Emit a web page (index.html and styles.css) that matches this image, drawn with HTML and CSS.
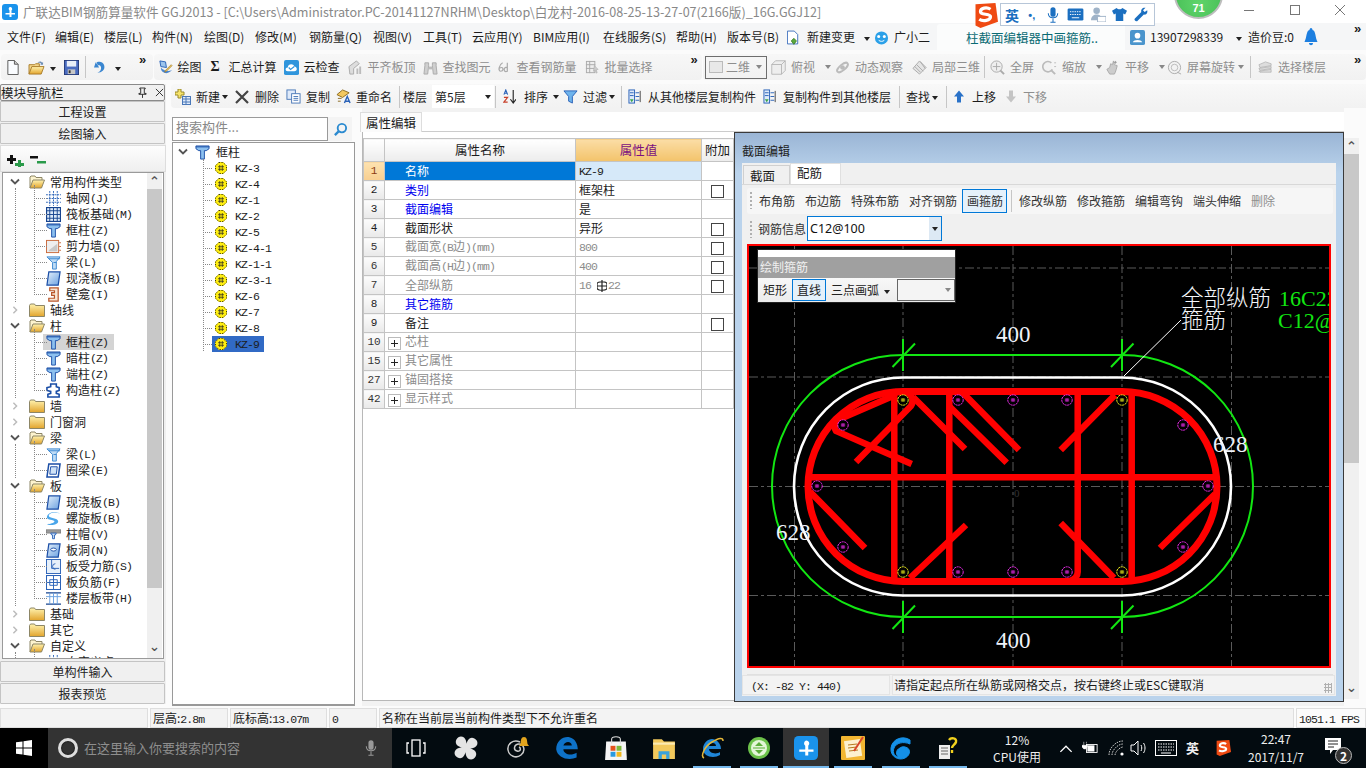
FILE: index.html
```html
<!DOCTYPE html>
<html lang="zh">
<head>
<meta charset="utf-8">
<title>GGJ2013</title>
<link rel="stylesheet" href="styles.css">
</head>
<body>
<svg class="defs" xmlns="http://www.w3.org/2000/svg">
<defs>
<linearGradient id="fy" x1="0" y1="0" x2="0" y2="1"><stop offset="0" stop-color="#fff3b0"/><stop offset="1" stop-color="#e2a42c"/></linearGradient>
<linearGradient id="fb" x1="0" y1="0" x2="1" y2="1"><stop offset="0" stop-color="#e4f0fb"/><stop offset="1" stop-color="#6aa0e0"/></linearGradient>
<symbol id="chev-d" viewBox="0 0 10 8"><path d="M1 1.5l4 4 4-4" fill="none" stroke="#555" stroke-width="1.8"/></symbol>
<symbol id="chev-r" viewBox="0 0 10 10"><path d="M3 1l4 4-4 4" fill="none" stroke="#bbb" stroke-width="1.8"/></symbol>
<symbol id="f-c" viewBox="0 0 16 14"><path d="M.5 2.5l1-1.5h4l1 1.5h9v11H.5z" fill="url(#fy)" stroke="#8d8666"/></symbol>
<symbol id="f-o" viewBox="0 0 16 14"><path d="M1 13V2l1-1h4l1 1.5h6V5" fill="#fdf4cf" stroke="#8d8666"/><path d="M1 13l3-8h11.500l-3 8z" fill="url(#fy)" stroke="#8d8666"/></symbol>
<symbol id="col" viewBox="0 0 16 16"><path d="M1 1h14v3l-3 2h-2v9H6V6H4L1 4z" fill="#8cc0ef" stroke="#1b4ea6"/><path d="M1 2h14" stroke="#1b4ea6"/></symbol>
<symbol id="grid" viewBox="0 0 16 16"><path d="M0 4h16M0 8h16M0 12h16M4 0v16M8 0v16M12 0v16" stroke="#2a62b8" fill="none" stroke-dasharray="2 1"/></symbol>
<symbol id="raft" viewBox="0 0 16 16"><rect x=".5" y=".5" width="15" height="15" fill="#dce9f8" stroke="#17448f" stroke-width="1.400"/><path d="M4 1v14M8 1v14M12 1v14M1 4h14M1 8h14M1 12h14" stroke="#17448f"/></symbol>
<symbol id="wall" viewBox="0 0 16 16"><rect x=".5" y="1.500" width="13" height="13" fill="#eee" stroke="#c8683a"/><path d="M3 12l9-7v8H3z" fill="#c8c8c8"/><path d="M14 4h2M14 8h2M14 12h2" stroke="#c8683a"/></symbol>
<symbol id="beam" viewBox="0 0 16 16"><path d="M1 2h14l-4 5v8H7V8z" fill="#bfdcf6" stroke="#3a86d0"/><path d="M3 4h12M8 8h3" stroke="#3a86d0"/></symbol>
<symbol id="slab" viewBox="0 0 16 16"><path d="M3 1h12l-2 14H1z" fill="url(#fb)" stroke="#1b4ea6" stroke-width="1.300"/></symbol>
<symbol id="niche" viewBox="0 0 16 16"><path d="M4 1h9v14H3v-3h6V9H6V6h3V4H4z" fill="#f9e6d4" stroke="#b9562a" stroke-width="1.300"/></symbol>
<symbol id="ccol" viewBox="0 0 16 16"><path d="M5 1h6v3l3 1v3l-3 1v2l3 1v3H2v-3l3-1V9L1 8V5l4-1z" fill="#fff" stroke="#1b4ea6" stroke-width="1.700"/></symbol>
<symbol id="ring" viewBox="0 0 16 16"><path d="M3 1h12l-2 14H1z" fill="#fff" stroke="#1b4ea6" stroke-width="1.600"/><path d="M5 4h7l-1 8H4z" fill="#cfe2f7" stroke="#1b4ea6"/></symbol>
<symbol id="spiral" viewBox="0 0 16 16"><path d="M15 3C10 0 3 2 3 5s10 2 10 6-8 5-12 3c3 0 8-1 8-3S0 10 1 6s9-7 14-3z" fill="#4aa6ea"/></symbol>
<symbol id="cap" viewBox="0 0 16 16"><rect x="0" y="3" width="16" height="3.500" fill="#9a9a9a" stroke="#666" stroke-width=".6"/><path d="M5 6.500h6l-1 2H9v4H7v-4H6z" fill="#cfe2f7" stroke="#2a62b8"/></symbol>
<symbol id="hole" viewBox="0 0 16 16"><path d="M3 1h12l-2 14H1z" fill="url(#fb)" stroke="#1b4ea6" stroke-width="1.300"/><ellipse cx="8" cy="7" rx="3" ry="1.600" fill="#fff" stroke="#1b4ea6"/></symbol>
<symbol id="rebar" viewBox="0 0 16 16"><rect x=".5" y=".5" width="15" height="15" fill="#e6f0fa" stroke="#2a62b8"/><path d="M6 1v9h8M10 5a3 3 0 1 0 0 6" stroke="#2a62b8" fill="none"/></symbol>
<symbol id="neg" viewBox="0 0 16 16"><rect x=".5" y=".5" width="15" height="15" fill="#fff" stroke="#2a62b8" stroke-width="1.200"/><path d="M8 1v14M1 8h14M4 5h8v6H4z" stroke="#2a62b8" fill="none"/></symbol>
<symbol id="strip" viewBox="0 0 16 16"><path d="M0 2h16M0 14h16" stroke="#17448f" stroke-width="1.500"/><path d="M4 2v12M8 2v12M12 2v12M0 6h16" stroke="#6aa0e0"/></symbol>
<symbol id="kz" viewBox="0 0 14 14"><path d="M4.500 0h5L14 4.500v5L9.500 14h-5L0 9.500v-5z" fill="#ffee10"/><path d="M4.500.5h5l4 4v5l-4 4h-5l-4-4v-5z" fill="none" stroke="#111" stroke-dasharray="1.500 1.500"/><path d="M3.500 5.500h7M3.500 8.500h7M5.500 3.500v7M8.500 3.500v7" stroke="#222" stroke-width=".8"/></symbol>
<symbol id="new" viewBox="0 0 12 16"><path d="M.5.500h7l4 4v11H.5z" fill="#fafcff" stroke="#555"/><path d="M7.500.500v4h4" fill="#ccc" stroke="#555"/></symbol>
<symbol id="open" viewBox="0 0 18 16"><path d="M1 15V5h6l1-1h4v3" fill="#f4d68a" stroke="#a97c2a"/><path d="M1 15l3-8h13l-3 8z" fill="url(#fy)" stroke="#a97c2a"/><path d="M10 3c2-2 4-2 5 0l1-1v3h-3l1-1c-1-1-2-1-4-1z" fill="#6f8fb5"/></symbol>
<symbol id="save" viewBox="0 0 16 16"><rect x=".5" y=".5" width="15" height="15" fill="#4a6cc0" stroke="#23397a"/><rect x="3" y="1" width="10" height="6" fill="#e8eef8"/><rect x="4" y="10" width="8" height="5" fill="#c8c8c8"/><rect x="5" y="11" width="2" height="3" fill="#333"/></symbol>
<symbol id="undo" viewBox="0 0 14 16"><path d="M3 2l2 5h-2c1-2 4-2 5 0 1 3-1 6-4 7 5 0 9-3 8-8C11 1 5 0 2 3z" fill="#3a86d0"/><path d="M0 8h6L2 2z" fill="#3a86d0"/></symbol>
<symbol id="draw" viewBox="0 0 16 16"><path d="M2 1l6 1 1 6-6-1z" fill="#9cc4ec" stroke="#2a62b8"/><path d="M3 8c0 4 3 6 6 6 2 0 5-2 6-3-3 1-6 1-8 0-2-1-3-2-4-3z" fill="#4a86d0"/><path d="M15 6l-6 6-2 1 1-2 6-6z" fill="#f2c85a" stroke="#8a6a20" stroke-width=".6"/></symbol>
<symbol id="cloud" viewBox="0 0 16 16"><rect width="16" height="16" rx="2" fill="#2f95dc"/><path d="M4 12c-3 0-3-4 0-4 0-4 6-5 7-1 3 0 4 5 0 5z" fill="#fff"/><path d="M5 8l2 2 4-3" fill="none" stroke="#2f95dc" stroke-width="1.300"/></symbol>
<symbol id="gflat" viewBox="0 0 16 16"><path d="M1 7l8-6 3 3-6 5v6H2z" fill="#ddd" stroke="#aaa"/><path d="M9 9h2v6H9zM12 7h2v8h-2z" fill="#bbb"/></symbol>
<symbol id="gbino" viewBox="0 0 16 16"><path d="M2 3h4v3l-1 9H1L2 6zM10 3h4v3l1 9h-4l-1-9z" fill="#cfcfcf" stroke="#aaa"/><path d="M6 7h4v3H6z" fill="#bbb"/></symbol>
<symbol id="gsix" viewBox="0 0 16 16"><path d="M6 3C2 5 1 12 4 12s3-4 1-4-3 1-3 2M11 3v9c-3 1-4-1-3-3s3-1 3 0" fill="none" stroke="#aaa" stroke-width="1.300"/></symbol>
<symbol id="gsel" viewBox="0 0 16 16"><rect x="1.500" y="1.500" width="9" height="12" fill="#eee" stroke="#aaa"/><path d="M1 5h10M1 9h10M5 1v13" stroke="#aaa"/><path d="M10 6l4 4-2 .5 1 3-1 .5-1-3-2 1z" fill="#ccc" stroke="#aaa" stroke-width=".6"/></symbol>
<symbol id="gbox" viewBox="0 0 20 20"><path d="M1 6l5-5h13v13l-5 5H1z" fill="#eee" stroke="#aaa"/><path d="M1 6h13v13M14 6l5-5" stroke="#aaa" fill="none"/></symbol>
<symbol id="grot" viewBox="0 0 16 16"><ellipse cx="8" cy="8" rx="7" ry="3" fill="none" stroke="#bbb" stroke-width="2" transform="rotate(-40 8 8)"/><circle cx="8" cy="8" r="2.500" fill="#bbb"/></symbol>
<symbol id="gcubes" viewBox="0 0 16 16"><path d="M1 9l7-8 7 7-7 7z" fill="#e4e4e4" stroke="#aaa"/><path d="M5 5l7 7M9 2l5 7M3 7l6 6" stroke="#aaa"/></symbol>
<symbol id="gzoom" viewBox="0 0 16 16"><circle cx="7" cy="7" r="6" fill="#eee" stroke="#aaa"/><path d="M7 3v8M3 7h8" stroke="#aaa"/><path d="M11 11l4 4" stroke="#aaa" stroke-width="2"/></symbol>
<symbol id="gmag" viewBox="0 0 16 16"><path d="M10 3a5.500 5.500 0 1 0 1 7" fill="#f2f2f2" stroke="#bbb" stroke-width="1.800"/><path d="M10 11l4 4" stroke="#bbb" stroke-width="2"/><path d="M13 3h2M13 7h2" stroke="#bbb"/></symbol>
<symbol id="gpan" viewBox="0 0 16 16"><path d="M2 10l3-2 1-4 2 1 1-4 1 4 3 1-1 4-1 3-1 2H5z" fill="#ccc" stroke="#aaa"/><path d="M11 1v3M9.500 2.500h3" stroke="#999"/></symbol>
<symbol id="gspin" viewBox="0 0 16 16"><circle cx="8" cy="8" r="6.500" fill="#f2f2f2" stroke="#aaa"/><circle cx="8" cy="8" r="3.500" fill="none" stroke="#bbb"/><path d="M11 13l4 2" stroke="#aaa"/></symbol>
<symbol id="gfloor" viewBox="0 0 16 16"><path d="M1 5l7-3 6 2v2L2 8zM1 9l13-2v2L2 11zM1 12l13-2v3H2z" fill="#ddd" stroke="#aaa" stroke-width=".7"/></symbol>
<symbol id="addc" viewBox="0 0 16 16"><path d="M3 0h3v3h3v3H6v3H3V6H0V3h3z" fill="#f6e36a" stroke="#9a8a2a"/><rect x="7.500" y="7.500" width="8" height="8" fill="#dfeafa" stroke="#4a78b8"/><path d="M8 10h7M8 13h7M11 8v7" stroke="#4a78b8"/></symbol>
<symbol id="del" viewBox="0 0 14 14"><path d="M1 1l12 12M13 1L1 13" stroke="#444" stroke-width="2.200"/></symbol>
<symbol id="copy" viewBox="0 0 16 16"><rect x="1" y="1" width="9" height="10" fill="#dfeafa" stroke="#4a78b8"/><rect x="6" y="5" width="9" height="10" fill="#fff" stroke="#4a78b8"/><path d="M8 8h5M8 10h5M8 12h5" stroke="#4a78b8"/></symbol>
<symbol id="rn" viewBox="0 0 16 16"><path d="M1 6l6-5 7 3-7 5z" fill="#f3c860" stroke="#8a6a20"/><path d="M2 10h4M2 13h3" stroke="#8a6a20"/><path d="M9 15l3-7 3 7M10 13h4" fill="none" stroke="#2a62b8" stroke-width="1.500"/></symbol>
<symbol id="sort" viewBox="0 0 14 16"><path d="M1 6l2-5 2 5M1.500 4.500h3" fill="none" stroke="#2a62b8" stroke-width="1.200"/><path d="M1 9h4l-4 5h4" fill="none" stroke="#c8402a" stroke-width="1.200"/><path d="M11 1v13M8 11l3 4 3-4" fill="none" stroke="#222" stroke-width="1.200"/></symbol>
<symbol id="funnel" viewBox="0 0 16 16"><path d="M1 2h14L10 8v7l-4-2V8z" fill="#6fb4ec" stroke="#2a62b8"/></symbol>
<symbol id="cpy2" viewBox="0 0 16 16"><rect x="1" y="1" width="6" height="14" fill="#dfeafa" stroke="#2a62b8"/><path d="M2 4h4M2 7h4" stroke="#2a62b8"/><path d="M8 4h4M8 8h4M8 12h4" stroke="#2a62b8"/><path d="M13 2v12" stroke="#444"/><path d="M2 11h4l-2 3z" fill="#3aa648"/></symbol>
<symbol id="up" viewBox="0 0 12 14"><path d="M6 1l5 6H8v6H4V7H1z" fill="#2a72c8"/></symbol>
<symbol id="dn" viewBox="0 0 12 14"><path d="M6 13L1 7h3V1h4v6h3z" fill="#c4c4c4"/></symbol>
<symbol id="nb" viewBox="0 0 14 16"><path d="M.500.500h8l4 4v11H.500z" fill="#fff" stroke="#2a62b8"/><path d="M8 9l3 3-3 4-3-4z" fill="#5aaa3a" stroke="#3a7a2a"/></symbol>
<symbol id="gx" viewBox="0 0 16 16"><ellipse cx="8" cy="8.500" rx="7" ry="7" fill="#2aa0e8"/><circle cx="5" cy="7" r="1.600" fill="#fff"/><circle cx="11" cy="7" r="1.600" fill="#fff"/><path d="M5 11c2 1.500 4 1.500 6 0" stroke="#fff" fill="none"/></symbol>
<symbol id="usr" viewBox="0 0 16 16"><rect width="16" height="16" rx="2" fill="#4a94cc"/><circle cx="8" cy="6" r="3" fill="#fff"/><path d="M3 13c1-3 9-3 10 0z" fill="#fff"/></symbol>
<symbol id="bell" viewBox="0 0 14 18"><path d="M7 0c1 0 1.500 1 1.500 2C12 3 11 9 13.500 14H.5C3 9 2 3 5.500 2 5.500 1 6 0 7 0z" fill="#1d7fe0"/><path d="M5 15h4c0 3-4 3-4 0z" fill="#1d7fe0"/></symbol>
<symbol id="app" viewBox="0 0 16 16"><rect width="16" height="16" rx="3" fill="#1a93ec"/><path d="M8 3a2 2 0 0 1 1.500 3.500V9H13v1.500H9.500V13H7.500v-2.500H3.500V9h4V6.500A2 2 0 0 1 8 3z" fill="#fff"/></symbol>
<symbol id="pin" viewBox="0 0 10 12"><path d="M2 1h6v1H7v5h2v1H1V7h2V2H2zM5 8v4" stroke="#222" fill="none"/></symbol>
<symbol id="cross" viewBox="0 0 10 10"><path d="M1 1l8 8M9 1L1 9" stroke="#222"/></symbol>
<symbol id="pm" viewBox="0 0 40 12"><path d="M4 1h3v3h3v3H7v3H4V7H1V4h3z" fill="#111" transform="translate(-1 -1)"/><path d="M11 5h3v3h3v3h-3v1h-3v-1H8V8h3z" fill="#2a9a4a"/><rect x="23" y="1" width="8" height="2.500" fill="#111"/><rect x="30" y="6" width="9" height="2.500" fill="#2a9a4a"/></symbol>
<symbol id="mag" viewBox="0 0 16 16"><circle cx="9.500" cy="6.500" r="4.500" fill="none" stroke="#2a8ad0" stroke-width="2"/><path d="M6 10l-4 4" stroke="#2a8ad0" stroke-width="2.500"/></symbol>
<symbol id="win" viewBox="0 0 16 16"><path d="M0 2.300L6.500 1.400v6.100H0zM7.500 1.200L16 0v7.500H7.500zM0 8.500h6.500v6.100L0 13.700zM7.500 8.500H16V16l-8.500-1.200z" fill="#fff"/></symbol>
<symbol id="mic" viewBox="0 0 14 20"><rect x="4" y="1" width="6" height="11" rx="3" fill="currentColor"/><path d="M1.500 8c0 7 11 7 11 0M7 14v4M4 18.500h6" fill="none" stroke="currentColor" stroke-width="1.200"/></symbol>
<symbol id="tv" viewBox="0 0 20 18"><rect x="6" y="1" width="8" height="16" fill="none" stroke="#fff" stroke-width="1.300"/><path d="M3 4H1v10h2M17 4h2v10h-2" fill="none" stroke="#fff" stroke-width="1.300"/></symbol>
<symbol id="pw" viewBox="0 0 20 20"><path d="M10 10C4 10 0 7 2 3s7-3 8 1 0 6 0 6zM10 10c0-6 3-10 7-8s3 7-1 8-6 0-6 0zM10 10c6 0 10 3 8 7s-7 3-8-1 0-6 0-6zM10 10c0 6-3 10-7 8s-3-7 1-8 6 0 6 0z" fill="#e4e4e4"/></symbol>
<symbol id="sw" viewBox="0 0 24 24"><path d="M15 6C8 3 2 8 3 14s8 9 13 5 3-11-2-11-6 6-2 7 4-3 2-4" fill="none" stroke="#ccc" stroke-width="1.500"/><path d="M19 1c3 0 3 3 3.500 7l1.500 2H14l1.500-2C16 4 16 1 19 1z" fill="#e3a51e"/></symbol>
<symbol id="edge" viewBox="0 0 20 20"><path d="M1 11C1 4 7 0 12 1s7 6 7 10H7c0 4 6 6 11 3v4c-7 3-16 0-17-7zM7 8h7c0-4-6-4-7 0z" fill="#0e72c8"/></symbol>
<symbol id="store" viewBox="0 0 20 22"><path d="M1 5h18l1 17H0z" fill="#f5f5f5"/><path d="M6 7V3c0-3 8-3 8 0v4" fill="none" stroke="#ddd"/><rect x="5" y="9" width="4.500" height="4.500" fill="#e4501c"/><rect x="10.500" y="9" width="4.500" height="4.500" fill="#7cb83a"/><rect x="5" y="14.500" width="4.500" height="4.500" fill="#2a9ae0"/><rect x="10.500" y="14.500" width="4.500" height="4.500" fill="#f2b81e"/></symbol>
<symbol id="exp" viewBox="0 0 22 22"><path d="M1 3h8l2 2h10v16H1z" fill="#f2c95c"/><rect x="1" y="6" width="20" height="2" fill="#fbeab0"/><path d="M6 21v-7h10v7h-3v-4H9v4z" fill="#3aa2dc"/></symbol>
<symbol id="ie" viewBox="0 0 24 24"><path d="M3 13C3 7 8 3 12 3s9 4 9 10H9c0 4 7 6 11 3v3c-6 4-17 2-17-6zM9 10h7c0-4-6-4-7 0z" fill="#1f86d8"/><path d="M4 22C0 20 5 10 12 6s11-5 11-1" fill="none" stroke="#e6b83a" stroke-width="1.500"/></symbol>
<symbol id="gs" viewBox="0 0 24 24"><circle cx="12" cy="12" r="11" fill="#6cc24a"/><circle cx="12" cy="12" r="8" fill="#e4f6d8"/><path d="M8 10l4-4 4 4zM8 14h8l-4 4z" fill="#5cae3a"/><rect x="6" y="11.500" width="12" height="1" fill="#5cae3a"/></symbol>
<symbol id="note" viewBox="0 0 24 24"><rect width="24" height="24" rx="1" fill="#f2b632"/><rect x="4" y="4" width="16" height="17" fill="#fdf1cf" transform="rotate(-8 12 12)"/><path d="M7 9l9-1M7 12l9-1M8 15l9-1" stroke="#b77a20"/><path d="M22 1L13 15" stroke="#d8462a" stroke-width="2"/></symbol>
<symbol id="g" viewBox="0 0 24 24"><path d="M21 4C14-1 3 3 2 12s8 13 14 10 6-10 0-11c-4-1-7 2-5 5 2 2 5 0 4-1-1 1-3 1-3-1s5-2 6 1c0-3-3-5-7-3-5 2-4 8-1 9-4 0-7-4-5-9s9-7 16-4z" fill="#1490e8" stroke="#1490e8"/></symbol>
<symbol id="qdoc" viewBox="0 0 20 24"><rect x="1" y="9" width="11" height="14" fill="#eee"/><path d="M3 12h7M3 15h7M3 18h7" stroke="#666"/><path d="M11 4c2-3 8-2 7 2-1 3-4 3-4 6M14 14v3" fill="none" stroke="#f2d21e" stroke-width="2.400"/></symbol>
<symbol id="bat" viewBox="0 0 18 16"><rect x="5" y="4" width="12" height="9" fill="none" stroke="#fff"/><rect x="6" y="5" width="8" height="7" fill="#fff"/><path d="M2 1v5M5 1v2M0 5h6v2l-2 2H2L0 7z" fill="#fff" stroke="#fff" stroke-width=".6"/></symbol>
<symbol id="wifi" viewBox="0 0 16 16"><path d="M1 15C1 8 8 1 15 1M4 15c0-5 6-11 11-11M7 15c0-3 5-8 8-8" stroke="#ccc" fill="none" stroke-dasharray="1.500 1"/><circle cx="14" cy="14" r="1.600" fill="#fff"/></symbol>
<symbol id="vol" viewBox="0 0 16 16"><path d="M1 5h3l4-4v14l-4-4H1z" fill="none" stroke="#fff"/><path d="M11 5c1 2 1 4 0 6M13.500 3c2 3 2 7 0 10" fill="none" stroke="#fff"/></symbol>
<symbol id="kbd" viewBox="0 0 22 16"><rect x=".5" y=".5" width="21" height="15" fill="none" stroke="#fff"/><path d="M3 4h16M3 7h16M3 10h16" stroke="#fff" stroke-dasharray="1.500 1"/><path d="M6 13h10" stroke="#fff"/></symbol>
<symbol id="sg" viewBox="0 0 20 20"><path d="M2 1l16-1 2 15-14 5-4-2z" fill="#ef4a12"/><path d="M14 5c-3-2-8-1-8 2s8 1 8 4-6 4-9 2" fill="none" stroke="#fff" stroke-width="2.600"/></symbol>
<symbol id="msg" viewBox="0 0 18 18"><path d="M1 1h16v12H9l-3 4v-4H1z" fill="#fff"/><path d="M4 4h10M4 7h10M4 10h6" stroke="#222"/></symbol>
<symbol id="nd-m" viewBox="0 0 12 12"><circle cx="6" cy="6" r="5.200" fill="#000" stroke="#ff30ff" stroke-width=".9" stroke-dasharray="2.200 .6"/><path d="M3.800 5.200h4.400M3.800 6.800h4.400M5.200 4.200v3.600M6.800 4.200v3.600" stroke="#ff30ff" stroke-width=".6"/></symbol>
<symbol id="nd-y" viewBox="0 0 12 12"><circle cx="6" cy="6" r="5.200" fill="#000" stroke="#ffff20" stroke-width=".9" stroke-dasharray="2.200 .6"/><path d="M3.800 5.200h4.400M3.800 6.800h4.400M5.200 4.200v3.600M6.800 4.200v3.600" stroke="#ffff20" stroke-width=".6"/></symbol>
<symbol id="rb" viewBox="0 0 10 12"><path d="M0 4c0-3 10-3 10 0v4c0 3-10 3-10 0zM0 6h10M5 0v12" fill="none" stroke="#222" stroke-width="1.200"/></symbol>
<symbol id="wr" viewBox="0 0 16 18"><path d="M14 1c-3-1-6 2-5 5L1 14c-1 1 1 4 3 3l8-8c3 1 5-2 4-5l-3 2-2-2z" fill="#1b6fc0"/></symbol>
<symbol id="tee" viewBox="0 0 16 16"><path d="M5 1L0 4l2 4 2-1v8h8V7l2 1 2-4-5-3c-1 2-5 2-6 0z" fill="#1b6fc0"/></symbol>
<symbol id="ppl" viewBox="0 0 16 16"><circle cx="6" cy="4" r="3.500" fill="#9fb3c8"/><path d="M0 14c0-8 12-8 12 0z" fill="#9fb3c8"/><rect x="7" y="10" width="9" height="6" fill="#fff" stroke="#9fb3c8"/></symbol>
<symbol id="imekb" viewBox="0 0 18 14"><rect x=".5" y=".5" width="17" height="13" rx="1.500" fill="#1b6fc0"/><path d="M3 4h12M3 7h12" stroke="#fff" stroke-dasharray="1.500 1"/><path d="M5 10.500h8" stroke="#fff"/></symbol>
</defs>
</svg>

<header class="title">
  <svg class="logo"><use href="#app"/></svg>
  <span>广联达BIM钢筋算量软件 GGJ2013 - [C:\Users\Administrator.PC-20141127NRHM\Desktop\白龙村-2016-08-25-13-27-07(2166版)_16G.GGJ12]</span>
  <span class="winctl"><i class="wc-min"></i><i class="wc-max"></i><svg class="wc-x" viewBox="0 0 10 10"><path d="M0 0l10 10M10 0L0 10" stroke="#777"/></svg></span>
</header>

<nav class="menu">
  <span>文件(F)</span><span>编辑(E)</span><span>楼层(L)</span><span>构件(N)</span><span>绘图(D)</span><span>修改(M)</span><span>钢筋量(Q)</span><span>视图(V)</span><span>工具(T)</span><span>云应用(Y)</span><span>BIM应用(I)</span><span>在线服务(S)</span><span>帮助(H)</span><span>版本号(B)</span>
  <span class="it g8"><svg class="ic i12"><use href="#nb"/></svg>新建变更</span><span><b class="caret"></b></span>
  <span class="it"><svg class="ic"><use href="#gx"/></svg>广小二</span>
  <span class="topic">柱截面编辑器中画箍筋..</span>
  <span class="it"><svg class="ic"><use href="#usr"/></svg>13907298339</span><span><b class="caret"></b></span><span>造价豆:0</span>
  <span class="it"><svg class="ic i12x"><use href="#bell"/></svg></span><span class="more">»</span>
</nav>

<div class="tools">
  <div class="tg tg1">
    <svg class="ic i12"><use href="#new"/></svg><svg class="ic i17"><use href="#open"/></svg><span><b class="caret"></b></span><svg class="ic"><use href="#save"/></svg><i class="sep"></i><svg class="ic i12"><use href="#undo"/></svg><span><b class="caret"></b></span><span class="more">»</span>
  </div>
  <div class="tg tg2">
    <span class="it"><svg class="ic"><use href="#draw"/></svg>绘图</span>
    <span class="it sig"><b class="sigma">Σ</b>汇总计算</span>
    <span class="it"><svg class="ic"><use href="#cloud"/></svg>云检查</span>
    <span class="it off"><svg class="ic"><use href="#gflat"/></svg>平齐板顶</span>
    <span class="it off"><svg class="ic"><use href="#gbino"/></svg>查找图元</span>
    <span class="it off"><svg class="ic"><use href="#gsix"/></svg>查看钢筋量</span>
    <span class="it off"><svg class="ic"><use href="#gsel"/></svg>批量选择</span>
    <span class="more">»</span>
  </div>
  <div class="tg tg3">
    <span class="dim"><i class="dimbox"></i>二维<b class="caret gc"></b></span>
    <span class="it off"><svg class="ic"><use href="#gbox"/></svg>俯视<b class="caret gc ml"></b></span>
    <span class="it off"><svg class="ic"><use href="#grot"/></svg>动态观察</span>
    <span class="it off"><svg class="ic"><use href="#gcubes"/></svg>局部三维</span>
    <i class="sep"></i>
    <span class="it off"><svg class="ic"><use href="#gzoom"/></svg>全屏</span>
    <span class="it off"><svg class="ic"><use href="#gmag"/></svg>缩放<b class="caret gc ml"></b></span>
    <span class="it off"><svg class="ic"><use href="#gpan"/></svg>平移<b class="caret gc ml"></b></span>
    <span class="it off"><svg class="ic"><use href="#gspin"/></svg>屏幕旋转<b class="caret gc tight"></b></span>
    <i class="sep"></i>
    <span class="it off"><svg class="ic"><use href="#gfloor"/></svg>选择楼层</span>
    <span class="more">»</span>
  </div>
</div>

<main class="main">
  <aside class="nav">
    <div class="nav-head"><span class="nav-name">模块导航栏</span><svg class="pin"><use href="#pin"/></svg><svg class="closer"><use href="#cross"/></svg></div>
    <button class="navbtn">工程设置</button>
    <button class="navbtn">绘图输入</button>
    <div class="nav-tools"><svg class="pm"><use href="#pm"/></svg></div>
    <div class="navtree">
      <div class="trees">
        <div class="grp open"><div class="hd"><svg class="chev"><use href="#chev-d"/></svg><svg class="fold"><use href="#f-o"/></svg>常用构件类型</div>
          <div class="kid"><span><svg class="ti"><use href="#grid"/></svg>轴网<i class="m">(J)</i></span></div>
          <div class="kid"><span><svg class="ti"><use href="#raft"/></svg>筏板基础<i class="m">(M)</i></span></div>
          <div class="kid"><span><svg class="ti"><use href="#col"/></svg>框柱<i class="m">(Z)</i></span></div>
          <div class="kid"><span><svg class="ti"><use href="#wall"/></svg>剪力墙<i class="m">(Q)</i></span></div>
          <div class="kid"><span><svg class="ti"><use href="#beam"/></svg>梁<i class="m">(L)</i></span></div>
          <div class="kid"><span><svg class="ti"><use href="#slab"/></svg>现浇板<i class="m">(B)</i></span></div>
          <div class="kid"><span><svg class="ti"><use href="#niche"/></svg>壁龛<i class="m">(I)</i></span></div>
        </div>
        <div class="grp"><div class="hd"><svg class="chev"><use href="#chev-r"/></svg><svg class="fold"><use href="#f-c"/></svg>轴线</div></div>
        <div class="grp open"><div class="hd"><svg class="chev"><use href="#chev-d"/></svg><svg class="fold"><use href="#f-o"/></svg>柱</div>
          <div class="kid sel"><span><svg class="ti"><use href="#col"/></svg>框柱<i class="m">(Z)</i></span></div>
          <div class="kid"><span><svg class="ti"><use href="#col"/></svg>暗柱<i class="m">(Z)</i></span></div>
          <div class="kid"><span><svg class="ti"><use href="#col"/></svg>端柱<i class="m">(Z)</i></span></div>
          <div class="kid"><span><svg class="ti"><use href="#ccol"/></svg>构造柱<i class="m">(Z)</i></span></div>
        </div>
        <div class="grp"><div class="hd"><svg class="chev"><use href="#chev-r"/></svg><svg class="fold"><use href="#f-c"/></svg>墙</div></div>
        <div class="grp"><div class="hd"><svg class="chev"><use href="#chev-r"/></svg><svg class="fold"><use href="#f-c"/></svg>门窗洞</div></div>
        <div class="grp open"><div class="hd"><svg class="chev"><use href="#chev-d"/></svg><svg class="fold"><use href="#f-o"/></svg>梁</div>
          <div class="kid"><span><svg class="ti"><use href="#beam"/></svg>梁<i class="m">(L)</i></span></div>
          <div class="kid"><span><svg class="ti"><use href="#ring"/></svg>圈梁<i class="m">(E)</i></span></div>
        </div>
        <div class="grp open"><div class="hd"><svg class="chev"><use href="#chev-d"/></svg><svg class="fold"><use href="#f-o"/></svg>板</div>
          <div class="kid"><span><svg class="ti"><use href="#slab"/></svg>现浇板<i class="m">(B)</i></span></div>
          <div class="kid"><span><svg class="ti"><use href="#spiral"/></svg>螺旋板<i class="m">(B)</i></span></div>
          <div class="kid"><span><svg class="ti"><use href="#cap"/></svg>柱帽<i class="m">(V)</i></span></div>
          <div class="kid"><span><svg class="ti"><use href="#hole"/></svg>板洞<i class="m">(N)</i></span></div>
          <div class="kid"><span><svg class="ti"><use href="#rebar"/></svg>板受力筋<i class="m">(S)</i></span></div>
          <div class="kid"><span><svg class="ti"><use href="#neg"/></svg>板负筋<i class="m">(F)</i></span></div>
          <div class="kid"><span><svg class="ti"><use href="#strip"/></svg>楼层板带<i class="m">(H)</i></span></div>
        </div>
        <div class="grp"><div class="hd"><svg class="chev"><use href="#chev-r"/></svg><svg class="fold"><use href="#f-c"/></svg>基础</div></div>
        <div class="grp"><div class="hd"><svg class="chev"><use href="#chev-r"/></svg><svg class="fold"><use href="#f-c"/></svg>其它</div></div>
        <div class="grp open"><div class="hd"><svg class="chev"><use href="#chev-d"/></svg><svg class="fold"><use href="#f-o"/></svg>自定义</div>
          <div class="kid"><span><svg class="ti"><use href="#grid"/></svg>自定义点</span></div>
        </div>
      </div>
      <div class="vbar navbar"><span class="arrow">⌃</span><i class="thumb"></i><span class="arrow end">⌄</span></div>
    </div>
    <button class="navbtn low">单构件输入</button>
    <button class="navbtn low">报表预览</button>
  </aside>

  <div class="work">
    <div class="tb2">
      <span class="it"><svg class="ic i16"><use href="#addc"/></svg>新建<b class="caret"></b></span>
      <span class="it gap5"><svg class="ic i14"><use href="#del"/></svg>删除</span>
      <span class="it"><svg class="ic"><use href="#copy"/></svg>复制</span>
      <span class="it"><svg class="ic"><use href="#rn"/></svg>重命名</span>
      <i class="sep"></i>
      <span>楼层</span>
      <span class="floor">第5层<b class="caret"></b></span>
      <i class="sep"></i>
      <span class="it gap8"><svg class="ic i13"><use href="#sort"/></svg>排序<b class="caret"></b></span>
      <span class="it"><svg class="ic"><use href="#funnel"/></svg>过滤<b class="caret"></b></span>
      <i class="sep"></i>
      <span class="it"><svg class="ic"><use href="#cpy2"/></svg>从其他楼层复制构件</span>
      <span class="it"><svg class="ic"><use href="#cpy2"/></svg>复制构件到其他楼层</span>
      <i class="sep"></i>
      <span>查找<b class="caret"></b></span>
      <i class="sep"></i>
      <span class="it gap7"><svg class="ic i12"><use href="#up"/></svg>上移</span>
      <span class="it gap6 off"><svg class="ic i12"><use href="#dn"/></svg>下移</span>
    </div>
    <div class="panes">
      <section class="list">
        <div class="search"><span class="s-in">搜索构件...</span><span class="s-btn"><svg class="ic"><use href="#mag"/></svg></span></div>
        <div class="ltree">
          <div class="root"><svg class="chev"><use href="#chev-d"/></svg><svg class="ti"><use href="#col"/></svg>框柱</div>
          <div class="lk"><span><svg class="kz"><use href="#kz"/></svg><i class="m">KZ-3</i></span></div>
          <div class="lk"><span><svg class="kz"><use href="#kz"/></svg><i class="m">KZ-4</i></span></div>
          <div class="lk"><span><svg class="kz"><use href="#kz"/></svg><i class="m">KZ-1</i></span></div>
          <div class="lk"><span><svg class="kz"><use href="#kz"/></svg><i class="m">KZ-2</i></span></div>
          <div class="lk"><span><svg class="kz"><use href="#kz"/></svg><i class="m">KZ-5</i></span></div>
          <div class="lk"><span><svg class="kz"><use href="#kz"/></svg><i class="m">KZ-4-1</i></span></div>
          <div class="lk"><span><svg class="kz"><use href="#kz"/></svg><i class="m">KZ-1-1</i></span></div>
          <div class="lk"><span><svg class="kz"><use href="#kz"/></svg><i class="m">KZ-3-1</i></span></div>
          <div class="lk"><span><svg class="kz"><use href="#kz"/></svg><i class="m">KZ-6</i></span></div>
          <div class="lk"><span><svg class="kz"><use href="#kz"/></svg><i class="m">KZ-7</i></span></div>
          <div class="lk"><span><svg class="kz"><use href="#kz"/></svg><i class="m">KZ-8</i></span></div>
          <div class="lk cur"><span><svg class="kz"><use href="#kz"/></svg><i class="m">KZ-9</i></span></div>
        </div>
      </section>
      <section class="props">
        <div class="tabstrip"><span class="tab">属性编辑</span></div>
        <div class="propbody">
          <table class="grid">
            <colgroup><col class="c0"><col class="c1"><col class="c2"><col class="c3"></colgroup>
            <thead><tr><th class="n"></th><th>属性名称</th><th class="hv">属性值</th><th>附加</th></tr></thead>
            <tbody>
              <tr class="cur"><td class="n">1</td><td class="k">名称</td><td class="v"><i class="m">KZ-9</i></td><td></td></tr>
              <tr><td class="n">2</td><td class="k link">类别</td><td class="v">框架柱</td><td class="ck"><i class="box"></i></td></tr>
              <tr><td class="n">3</td><td class="k link">截面编辑</td><td class="v">是</td><td></td></tr>
              <tr><td class="n">4</td><td class="k">截面形状</td><td class="v">异形</td><td class="ck"><i class="box"></i></td></tr>
              <tr class="mute"><td class="n">5</td><td class="k">截面宽<i class="m">(B</i>边<i class="m">)(mm)</i></td><td class="v"><i class="m">800</i></td><td class="ck"><i class="box"></i></td></tr>
              <tr class="mute"><td class="n">6</td><td class="k">截面高<i class="m">(H</i>边<i class="m">)(mm)</i></td><td class="v"><i class="m">400</i></td><td class="ck"><i class="box"></i></td></tr>
              <tr class="mute"><td class="n">7</td><td class="k">全部纵筋</td><td class="v"><i class="m">16 </i><svg class="rbg"><use href="#rb"/></svg><i class="m">22</i></td><td class="ck"><i class="box"></i></td></tr>
              <tr><td class="n">8</td><td class="k link">其它箍筋</td><td class="v"></td><td></td></tr>
              <tr><td class="n">9</td><td class="k">备注</td><td class="v"></td><td class="ck"><i class="box"></i></td></tr>
              <tr class="mute"><td class="n">10</td><td class="k exp"><i class="plus"></i>芯柱</td><td class="v"></td><td></td></tr>
              <tr class="mute"><td class="n">15</td><td class="k exp"><i class="plus"></i>其它属性</td><td class="v"></td><td></td></tr>
              <tr class="mute"><td class="n">27</td><td class="k exp"><i class="plus"></i>锚固搭接</td><td class="v"></td><td></td></tr>
              <tr class="mute"><td class="n">42</td><td class="k exp"><i class="plus"></i>显示样式</td><td class="v"></td><td></td></tr>
            </tbody>
          </table>
        </div>
      </section>
      <div class="vbar pagebar"><span class="arrow">⌃</span><i class="thumb"></i><span class="arrow end">⌄</span></div>
    </div>
  </div>
</main>

<footer class="status">
  <span class="sc s0"></span><span class="sc s1">层高:<i class="m">2.8m</i></span><span class="sc s2">底标高:<i class="m">13.07m</i></span><span class="sc s3"><i class="m">0</i></span><span class="sc s4">名称在当前层当前构件类型下不允许重名</span><span class="sc s5"><i class="m">1051.1 FPS</i></span>
</footer>

<div class="taskbar">
  <span class="start"><svg class="wlogo"><use href="#win"/></svg></span>
  <span class="tsearch"><i class="cortana"></i><span class="ph">在这里输入你要搜索的内容</span><svg class="tmic"><use href="#mic"/></svg></span>
  <div class="apps">
    <span class="tk"><svg class="t-tv"><use href="#tv"/></svg></span>
    <span class="tk"><svg class="t24"><use href="#pw"/></svg></span>
    <span class="tk"><svg class="t24"><use href="#sw"/></svg></span>
    <span class="tk"><svg class="t24"><use href="#edge"/></svg></span>
    <span class="tk"><svg class="t24"><use href="#store"/></svg></span>
    <span class="tk"><svg class="t24"><use href="#exp"/></svg></span>
    <span class="tk run"><svg class="t24"><use href="#ie"/></svg></span>
    <span class="tk run"><svg class="t24"><use href="#gs"/></svg></span>
    <span class="tk act"><svg class="t24"><use href="#app"/></svg></span>
    <span class="tk run"><svg class="t24"><use href="#note"/></svg></span>
    <span class="tk run"><svg class="t24"><use href="#g"/></svg></span>
    <span class="tk run"><svg class="t24"><use href="#qdoc"/></svg></span>
  </div>
  <div class="tray">
    <span class="cpu">12%<br>CPU使用</span>
    <svg class="tr-up" viewBox="0 0 12 8"><path d="M1 7l5-5 5 5" fill="none" stroke="#fff" stroke-width="1.200"/></svg>
    <svg class="tr16"><use href="#bat"/></svg>
    <svg class="tr16"><use href="#wifi"/></svg>
    <svg class="tr16"><use href="#vol"/></svg>
    <svg class="tr-kb"><use href="#kbd"/></svg>
    <span class="ime">英</span>
    <svg class="tr16"><use href="#sg"/></svg>
    <span class="clock">22:47<br>2017/11/7</span>
    <span class="msgs"><svg class="tr-msg"><use href="#msg"/></svg><b class="badge">2</b></span>
  </div>
</div>

<section class="dialog">
  <div class="dl-title">截面编辑</div>
  <div class="dl-body">
    <div class="dl-tabs"><span class="dt">截面</span><span class="dt on">配筋</span></div>
    <div class="dl-panel">
      <div class="dl-tb1">
        <i class="grip"></i><span>布角筋</span><span>布边筋</span><span>特殊布筋</span><span>对齐钢筋</span><span class="pressed">画箍筋</span><i class="sep"></i><span>修改纵筋</span><span>修改箍筋</span><span>编辑弯钩</span><span>端头伸缩</span><span class="off">删除</span>
      </div>
      <div class="dl-tb2">
        <i class="grip"></i><span>钢筋信息</span>
        <span class="combo"><span class="combo-t">C12@100</span><span class="combo-a"><b class="caret"></b></span></span>
      </div>
      <div class="canvas">
        <svg class="cad" viewBox="749 246 580 420" xmlns="http://www.w3.org/2000/svg">
          <g class="gl">
            <path d="M794.500 246V666M903 246V666M1013 246V666M1122 246V666M1231.500 246V666"/>
            <path d="M749 268H1329M749 377H1329M749 486.500H1329M749 595.500H1329"/>
          </g>
          <text x="1014" y="497" class="zero">0</text>
          <g class="green">
            <path d="M903 355H1122A131 131 0 0 1 1122 617H903A131 131 0 0 1 903 355Z"/>
            <path d="M903 339V371M892.500 367L915 343.500M1122 339V371M1111 367L1133.500 343.500M903 601V633M892.500 629L915 605.500M1122 601V633M1111 629L1133.500 605.500"/>
          </g>
          <path class="white" d="M903 377.500H1122A109 109 0 0 1 1122 595.500H903A109 109 0 0 1 903 377.500Z"/>
          <path class="leader" d="M1124 376L1181 320"/>
          <g class="red">
            <path d="M903 391.500H1122A95 95 0 0 1 1122 581.500H903A95 95 0 0 1 903 391.500Z"/>
            <path class="thin" d="M894.300 391.500V581.500M949.300 391.500V581.500M1131.700 391.500V581.500M810 477.300H1215"/>
            <path class="thin" d="M895 392H905A9 9 0 0 1 911 406L856 462"/>
            <path class="thin" d="M913 397L965 449M950 407L1006.700 462.700M963 393L1019 450"/>
            <path class="thin" d="M893 396L840 419A8 8 0 0 0 836 431L911.700 464"/>
            <path class="thin" d="M810 491.700L865 548M910 578L966 525M1077.700 393V572Q1077.700 578 1070 581M1060.700 450L1115 395M1060.700 523L1114 578M1160 548L1215 494"/>
          </g>
          <g>
            <use href="#nd-m" x="837" y="419" width="12" height="12"/><use href="#nd-m" x="952" y="394" width="12" height="12"/><use href="#nd-m" x="1007" y="394" width="12" height="12"/><use href="#nd-m" x="1061" y="394" width="12" height="12"/><use href="#nd-m" x="1177" y="419" width="12" height="12"/><use href="#nd-m" x="811" y="480" width="12" height="12"/><use href="#nd-m" x="1202" y="480" width="12" height="12"/><use href="#nd-m" x="837" y="541" width="12" height="12"/><use href="#nd-m" x="952" y="566" width="12" height="12"/><use href="#nd-m" x="1007" y="566" width="12" height="12"/><use href="#nd-m" x="1061" y="566" width="12" height="12"/><use href="#nd-m" x="1177" y="541" width="12" height="12"/>
            <use href="#nd-y" x="897" y="394" width="12" height="12"/><use href="#nd-y" x="1116" y="394" width="12" height="12"/><use href="#nd-y" x="897" y="566" width="12" height="12"/><use href="#nd-y" x="1116" y="566" width="12" height="12"/>
          </g>
          <text x="1181" y="306" class="lbl">全部纵筋</text>
          <text x="1279" y="306" class="lbg">16C22</text>
          <text x="1181" y="328" class="lbl">箍筋</text>
          <text x="1278" y="328" class="lbg">C12@100</text>
          <text x="996" y="342" class="dimt">400</text>
          <text x="996" y="648" class="dimt">400</text>
          <text x="776" y="540" class="dimt">628</text>
          <text x="1213" y="452" class="dimt">628</text>
        </svg>
        <div class="popup">
          <div class="pop-top"></div>
          <div class="pop-head">绘制箍筋</div>
          <div class="pop-tb"><span>矩形</span><span class="pressed">直线</span><span>三点画弧<b class="caret ml"></b></span><span class="pop-combo"><b class="caret gc"></b></span></div>
        </div>
      </div>
      <div class="dl-gap"></div>
      <div class="dl-status"><span class="ds1"><i class="m">(X: -82 Y: 440)</i></span><span class="ds2">请指定起点所在纵筋或网格交点，按右键终止或ESC键取消<i class="resize"></i></span></div>
    </div>
  </div>
</section>

<div class="sogou">
  <svg class="s-logo"><use href="#sg"/></svg>
  <div class="s-bar"><b class="s-en">英</b><span class="s-c">•,</span><svg class="s-mic"><use href="#mic"/></svg><svg class="s-kb"><use href="#imekb"/></svg><svg class="s-i"><use href="#ppl"/></svg><svg class="s-i"><use href="#tee"/></svg><svg class="s-i"><use href="#wr"/></svg></div>
</div>
<div class="ball">71</div>
</body>
</html>
```
FILE: styles.css
```css
*{box-sizing:border-box}
html,body{margin:0;padding:0}
body{position:relative;width:1366px;height:768px;overflow:hidden;display:flex;flex-direction:column;background:#fbfbfb;color:#1c1c1c;font:12px/16px "Noto Sans CJK SC","Noto Sans",sans-serif}
.defs{position:absolute;width:0;height:0}
i,b{font-style:normal}
.m{font-family:"Liberation Mono",monospace;font-size:11.500px;font-style:normal;letter-spacing:-.9px}
svg{display:block;flex:none}

/* shared toolbar bits */
.it{display:flex;align-items:center;gap:5px;white-space:nowrap}
.g8{gap:8px}.gap5{gap:6px}.gap8{gap:8px}.gap7{gap:7px}.gap6{gap:6px}
.off{color:#8e8e8e}
.ic{width:15px;height:15px}
.i12{width:12px;height:15px}.i12x{width:14px;height:18px}.i13{width:13px;height:15px}.i14{width:14px;height:14px}.i16{width:16px;height:16px}.i17{width:17px;height:15px}
.caret{display:inline-block;width:0;height:0;border:3.500px solid transparent;border-top:4px solid #222;border-bottom:0;vertical-align:middle}
.caret.gc{border-top-color:#888}
.caret.ml{margin-left:5px}
.tb2 .caret{margin-left:2px}
.more{font:700 13px/12px "Liberation Sans",sans-serif;align-self:start}
.sep{display:block;width:1px;height:22px;background:#c6c6c6;align-self:center}

/* title bar */
.title{height:23px;flex:none;display:flex;align-items:center;background:#fff;color:#888;font-size:12.600px;white-space:nowrap;padding-left:2px}
.logo{width:16px;height:16px;margin-right:5px}
.winctl{margin-left:auto}
.wc-min{position:absolute;left:1244px;top:10px;width:10px;height:1px;background:#777}
.wc-max{position:absolute;left:1290px;top:5px;width:10px;height:10px;border:1px solid #777}
.wc-x{position:absolute;left:1335px;top:5px;width:10px;height:10px}

/* menu */
.menu{height:27px;flex:none;display:grid;grid-template-columns:48px 49px 48px 52px 51px 54px 64px 50px 49px 61px 70px 73px 51px 60px 77px 10px 63px 193px 106px 12px 56px 50px 12px;align-items:center;padding-left:7px;background:#f5f6f7;white-space:nowrap}
.topic{align-self:stretch;width:188px;margin-top:1px;background:#fbfcfc;color:#0a6b74;font-size:12.500px;line-height:27px;padding-left:29px;border-radius:3px 3px 0 0}

/* toolbar 1 */
.tools{height:26px;flex:none;margin-top:4px;display:flex;gap:1px;white-space:nowrap}
.tg{display:grid;align-items:center;background:linear-gradient(#f7f7f7,#f1f1f1);border-radius:4px}
.tg1{width:152px;margin-left:1px;padding-left:6px;grid-template-columns:21px 22px 14px 21px 9px 21px 24px 13px}
.tg2{width:550px;padding-left:4px;grid-template-columns:53px 73px 64px 75px 74px 88px 106px 8px}
.tg3{flex:1;padding-left:2px;grid-template-columns:66px 64px 77px 72px 6px 52px 63px 62px 83px 8px 96px 12px;margin-left:0}
.sigma{font:700 14px/16px "Liberation Serif",serif;width:14px}
.sig{gap:4px}
.dim{display:flex;align-items:center;width:62px;height:23px;border:1px solid #6e6e6e;color:#8e8e8e;padding-left:3px;gap:3px}
.dimbox{width:14px;height:12px;background:#e8e8e8;border:1px solid #bbb}
.dim .caret{margin-left:3px}
.tight{margin-left:-2px}

/* main */
.main{height:622px;flex:none;margin-top:4px;display:flex}
.nav{width:166px;height:620px;flex:none;display:flex;flex-direction:column;background:#f0f0f0}
.nav-head{height:17px;flex:none;display:flex;align-items:center;border:1px solid #8a8a8a;border-radius:2px;font-size:12.500px;margin-right:1px;white-space:nowrap}
.nav-name{flex:none;width:62px}
.pin{width:9px;height:11px;margin-left:75px}
.closer{width:9px;height:9px;margin-left:8px}
.navbtn{height:21px;flex:none;margin:0 1px 0 0;padding:0;background:#f0f0f0;border:1px solid #c4c4c4;border-radius:1px;font:inherit;color:#222}
.navbtn+.navbtn{margin-top:1px}
.nav-tools{height:27px;flex:none;margin-top:1px;background:linear-gradient(#fdfdfd,#efefef);border:1px solid #ddd;padding:9px 0 0 6px}
.pm{width:40px;height:12px}
.navtree{flex:1;min-height:0;margin:0 2px 2px;display:flex;border:1px solid #9a9a9a;background:#fff;overflow:hidden}
.trees{flex:1;padding-top:1px;overflow:hidden}
.grp{position:relative}
.grp.open::before{content:"";position:absolute;left:12px;top:14px;bottom:0;border-left:1px dotted #888}
.hd{height:16px;display:flex;align-items:center;white-space:nowrap}
.chev{width:10px;height:8px;margin:0 10px 0 7px}
.grp .hd svg:first-child{margin-right:9px}
.fold{width:16px;height:14px;margin-right:5px}
.kid{position:relative;height:16px;display:flex;align-items:center;padding-left:40px;white-space:nowrap}
.kid::before{content:"";position:absolute;left:31px;top:-8px;width:12px;height:16px;border-left:1px dotted #888;border-bottom:1px dotted #888}
.kid:nth-of-type(2)::before{top:-5px;height:13px}
.kid span{display:flex;align-items:center;height:16px;padding:0 6px 0 3px}
.kid .m{padding-top:2px}
.sel span{background:#d4d4d4}
.ti{width:15px;height:15px;margin-right:5px}
.vbar{flex:none;width:15px;display:flex;flex-direction:column;background:#f0f0f0;color:#555}
.navbar{margin-right:1px}
.arrow{height:16px;flex:none;text-align:center;font:700 13px/18px "DejaVu Sans",sans-serif;background:#f0f0f0}
.arrow.end{margin-top:auto;line-height:10px}
.thumb{display:block;background:#c8c8c8}
.navbar .thumb{height:399px}

.work{flex:1;min-width:0;margin-left:5px;display:flex;flex-direction:column}
.tb2{height:24px;flex:none;display:grid;grid-template-columns:60px 51px 50px 63px 4px 30px 62px 8px 60px 58px 7px 135px 136px 7px 40px 7px 52px auto;align-items:center;padding:1px 0 0 4px;background:linear-gradient(#f8f8f8,#f2f2f2);border-radius:4px 0 0 4px;white-space:nowrap}
.tb2 .it .caret{margin-left:-3px}
.floor{width:62px;height:23px;background:#fff;line-height:23px;margin-left:-1px;padding-left:3px;display:flex;align-items:center;justify-content:space-between;padding-right:3px;font-size:12px}
.panes{flex:1;min-height:0;display:flex}
.list{width:184px;flex:none;background:#fbfbfb;display:flex;flex-direction:column;padding-top:9px}
.search{height:24px;flex:none;display:flex;margin-left:1px}
.s-in{width:156px;border:1px solid #9a9a9a;background:#fff;color:#888;padding-left:3px;line-height:18px;font-size:13px}
.s-btn{width:24px;background:#f4f4f4;display:flex;align-items:center;justify-content:center}
.ltree{flex:1;margin:1px 0 0 1px;border:1px solid #999;border-bottom-width:2px;background:#fff;padding-top:1px;position:relative}
.root{height:16px;display:flex;align-items:center;margin-left:-1px}
.root .chev{margin:0 7px 0 6px}
.root .ti{margin-right:6px}
.ltree::before{content:"";position:absolute;left:30px;top:16px;height:192px;border-left:1px dotted #888}
.lk{position:relative;height:16px;display:flex;align-items:center;padding-left:39px}
.lk::before{content:"";position:absolute;left:30px;top:8px;width:9px;border-top:1px dotted #888}
.lk span{display:flex;align-items:center;height:16px;padding:0 5px 0 3px;gap:8px}
.lk .m{padding-top:1px}
.cur span{background:#316ac5}
.kz{width:12px;height:12px}

.props{width:982px;flex:none;margin-left:7px;display:flex;flex-direction:column;padding-top:4px;background:#f2f2f2}
.tabstrip{height:20px;flex:none;background:#fff;border-bottom:1px solid #ccc}
.tab{display:block;width:62px;height:20px;margin-left:-2px;background:#fbfbfb;border:1px solid #ddd;border-bottom:0;padding-left:5px;font-size:12.500px;line-height:19px}
.propbody{flex:1;background:#fff;border:1px solid #b8b8b8;border-width:0 0 1px 1px;padding:6px 0 0;margin-bottom:5px}
.grid{table-layout:fixed;width:370px;border-collapse:collapse;font-size:12px;border:1px solid #bdbdbd}
.c0{width:21px}.c1{width:191px}.c2{width:126px}.c3{width:32px}
.grid th{height:23px;padding:0;border:1px solid #c4c4c4;background:linear-gradient(#fff,#ececec);font-weight:400;font-size:12.500px}
.grid th.hv{background:linear-gradient(#fbdda6,#f3c36a);color:#7b1180}
.grid td{height:19px;padding:0;border:1px solid #c4c4c4;line-height:14px;overflow:hidden;white-space:nowrap}
.n{background:linear-gradient(#fcfcfc,#e9e9e9);text-align:center;font:11px/14px "Liberation Mono",monospace}
.grid tr.cur td.n{background:linear-gradient(#fde2b0,#f8cf90);color:#8a3a10}
.k{padding-left:20px !important}
.exp{padding-left:3px !important}
.v{padding-left:3px !important}
.link{color:#0000f0}
.mute{color:#8c8c8c}
.mute td.n{color:#333}
.grid tr.cur td.k{background:#0078d7;color:#fff}
.grid tr.cur td.v{background:#d6e9f9}
.ck{text-align:center}
.box{display:inline-block;width:13px;height:13px;border:1px solid #444;vertical-align:middle;margin-left:-1px}
.plus{display:inline-block;width:13px;height:13px;margin-right:4px;vertical-align:middle;border:1px solid #bbb;background:linear-gradient(#222,#222) center/7px 1px no-repeat,linear-gradient(#222,#222) center/1px 7px no-repeat,#fff}
.rbg{display:inline-block;width:10px;height:12px;vertical-align:middle;margin-right:1px}
.pagebar{margin-top:30px;height:561px}
.pagebar .thumb{height:309px}

/* status */
.status{height:20px;flex:none;margin-top:2px;display:flex;gap:2px;white-space:nowrap;background:#fbfbfb}
.sc{display:block;background:#f3f3f3;border:1px solid #dedede;padding-left:2px;line-height:18px}
.s0{width:148px}.s1{width:78px}.s2{width:97px}.s3{width:48px}.s4{width:915px}.s5{flex:1;background:#fbfbfb}

/* taskbar */
.taskbar{height:40px;flex:none;display:flex;background:#030b10;color:#eee;white-space:nowrap}
.start{width:48px;background:#000;display:flex;align-items:center;justify-content:center}
.wlogo{width:16px;height:16px}
.tsearch{width:344px;background:#333;display:flex;align-items:center;color:#aaa}
.cortana{width:20px;height:20px;margin-left:10px;border:3px solid #ddd;border-radius:50%;box-shadow:inset 0 0 2px #000}
.ph{margin-left:6px;font-size:13px;color:#8e8e8e}
.tmic{width:12px;height:20px;margin-left:auto;margin-right:15px;color:#999}
.apps{display:grid;grid-template-columns:48px 52px 50px 50px 48px 48px 47px 48px 46px 48px 47px 48px}
.tk{display:flex;align-items:center;justify-content:center;height:40px}
.t24{width:24px;height:24px}
.t-tv{width:20px;height:18px}
.run{background:linear-gradient(#76b9ed,#76b9ed) center bottom/38px 2px no-repeat}
.act{background:linear-gradient(#76b9ed,#76b9ed) center bottom/100% 2px no-repeat,#333}
.tray{flex:1;display:grid;grid-template-columns:68px 24px 26px 22px 25px 31px 29px 26px 83px 40px;align-items:center;padding-left:18px}
.cpu{width:54px;text-align:center;font-size:12px;line-height:17px}
.tr-up{width:14px;height:9px;margin-left:1px}
.tr16{width:16px;height:16px}
.tr-kb{width:22px;height:16px}
.ime{font-size:13px;font-weight:700}
.clock{width:70px;text-align:center;line-height:18px;font-size:12px}
.msgs{position:relative;display:block;width:22px;height:22px}
.tr-msg{width:18px;height:18px}
.badge{position:absolute;right:-6px;bottom:-5px;width:17px;height:17px;border-radius:50%;background:#333;border:1px solid #bbb;text-align:center;line-height:15px;font-size:12px;color:#fff}

/* dialog */
.dialog{position:absolute;left:734px;top:132px;width:610px;height:570px;display:flex;flex-direction:column;background:linear-gradient(#9ab5d5,#bad3ec 40px);border:1px solid #3a3a3a;padding:0 7px 5px}
.dl-title{height:30px;flex:none;line-height:36px;color:#222;font-size:12px}
.dl-body{flex:1;min-height:0;display:flex;flex-direction:column;background:#f0f0f0}
.dl-tabs{height:21px;flex:none;display:flex;align-items:flex-end}
.dt{width:47px;height:19px;margin-left:1px;border:1px solid #d0d0d0;border-bottom:0;padding-left:6px;line-height:19px;font-size:12.500px}
.dt.on{width:51px;height:21px;margin-left:0;background:#fff;border-color:#e0e0e0;line-height:18px}
.dl-panel{flex:1;min-height:0;display:flex;flex-direction:column;border-top:1px solid #d8d8d8;padding:3px 3px 3px 5px}
.dl-tb1,.dl-tb2{flex:none;display:grid;align-items:center;white-space:nowrap;border-radius:3px;color:#333}
.dl-tb1{height:26px;background:#f6f6f6;padding:0 0 1px 3px;grid-template-columns:9px 46px 46px 58px 53px 49px 8px 58px 58px 58px 58px 30px}
.dl-tb2{height:26px;margin-top:2px;padding-left:3px;grid-template-columns:8px 49px 136px;background:#f0f0f0}
.grip{display:block;width:2px;height:17px;background:repeating-linear-gradient(#b0b0b0 0 2px,transparent 2px 4px)}
.pressed{border:1px solid #0078d7;background:#e5f1fb;padding-left:4px;height:24px;line-height:22px;width:45px}
.combo{display:flex;height:25px;border:1px solid #0078d7;background:#fff;width:135px;align-self:start}
.combo-t{flex:1;padding-left:2px;font:12.500px/23px "Noto Sans",sans-serif;color:#111}
.combo-a{width:12px;background:#dde9f4;display:flex;align-items:center;justify-content:center}
.canvas{position:relative;flex:none;margin-top:2px;width:584px;height:424px;border:2px solid #f00;background:#000;overflow:hidden}
.cad{width:580px;height:420px}
.gl path{fill:none;stroke:#5a5a5a;stroke-width:1;stroke-dasharray:9 3 3 3}
.green path{fill:none;stroke:#12e612;stroke-width:2}
.white{fill:none;stroke:#fff;stroke-width:2.600}
.leader{fill:none;stroke:#fff;stroke-width:1}
.red path{fill:none;stroke:#f00;stroke-width:7}
.red .thin{stroke-width:6.500}
.lbl{fill:#f4f6fa;font:300 22.500px "Noto Sans CJK SC",sans-serif}
.lbg{fill:#12e612;font:22px "Liberation Serif",serif}
.dimt{fill:#eef2fa;font:23px "Liberation Serif",serif}
.zero{fill:#333;font:11px "Liberation Serif",serif}
.popup{position:absolute;left:8px;top:3px;width:199px;height:54px;border:1px solid #222;background:#f4f4f4;display:flex;flex-direction:column}
.pop-top{height:7px;flex:none;background:#fff}
.pop-head{height:21px;flex:none;background:#a0a0a0;color:#f0f0f0;line-height:19px;padding-left:2px}
.pop-tb{flex:1;display:grid;grid-template-columns:29px 39px 66px 58px;align-items:center;padding-left:5px;white-space:nowrap;color:#222;background:linear-gradient(#f8f8f8,#ececec)}
.pop-tb .pressed{width:34px;height:22px;line-height:20px;padding-left:4px}
.pop-combo{display:flex;align-items:center;justify-content:flex-end;height:22px;width:58px;border:1px solid #666;background:#f4f4f4;padding-right:3px}
.dl-gap{height:7px;flex:none;border-bottom:1px solid #e0e0e0}
.dl-status{height:20px;flex:none;display:flex;gap:2px;margin:0 -2px 0 -5px}
.ds1,.ds2{display:block;border:1px solid #e4e4e4;background:#f3f3f3;line-height:18px}
.ds1{width:148px;padding-left:8px}
.ds2{flex:1;padding-left:1px;position:relative}
.resize{position:absolute;right:2px;bottom:1px;width:8px;height:10px;background:radial-gradient(#b0b0b0 1px,transparent 1.200px) 0 0/3px 3px}

/* IME + badge floats */
.sogou{position:absolute;left:971px;top:3px;display:flex}
.s-logo{width:29px;height:25px}
.s-bar{width:155px;height:23px;border:1px solid #b7c6d8;background:#fff;display:flex;align-items:center;color:#1b6fc0;padding-left:4px}
.s-en{font-size:14px;width:25px;font-weight:700}
.s-c{width:20px;font:700 11px/12px "Liberation Sans",sans-serif}
.s-mic{width:12px;height:18px;margin-right:8px;color:#1b6fc0}
.s-kb{width:17px;height:13px;margin-right:7px}
.s-i{width:15px;height:15px;margin-right:6px}
.ball{position:absolute;left:1174px;top:-30px;width:49px;height:49px;border-radius:50%;background:radial-gradient(circle at 50% 70%,#5fd46a,#3db54e);border:2px solid #bdbdbd;color:#fff;font:700 11px/12px "Liberation Sans",sans-serif;text-align:center;padding-top:30px}
```
